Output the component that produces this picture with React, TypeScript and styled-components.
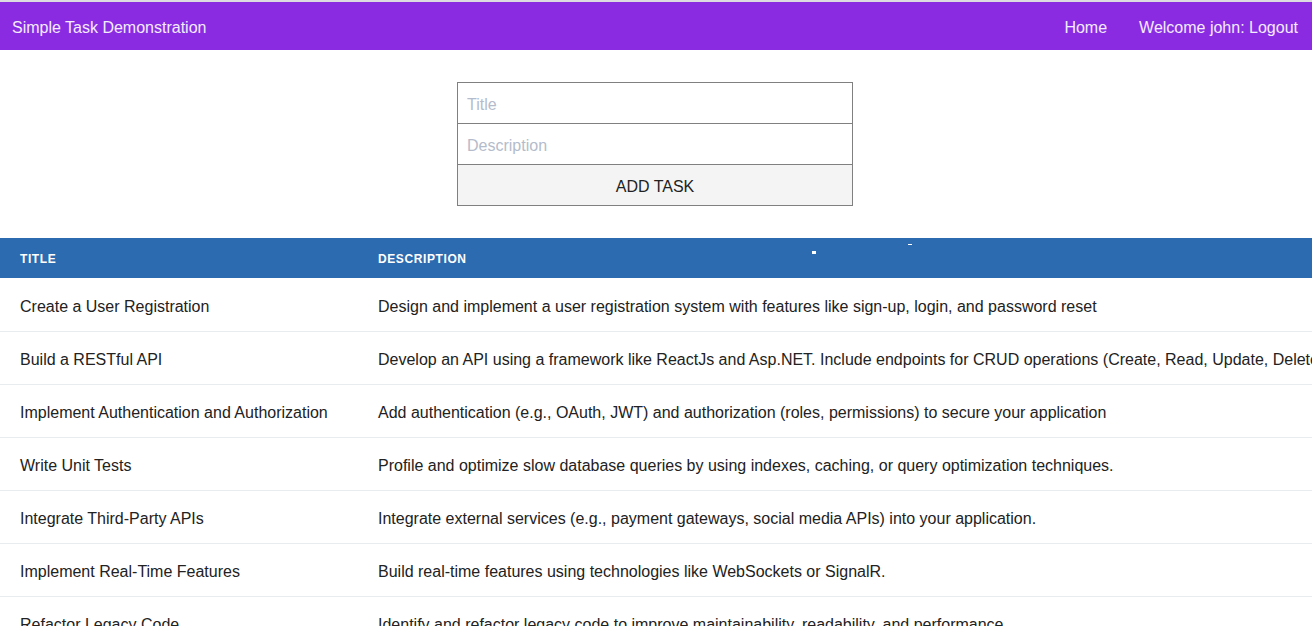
import React from "react";
import styled, { createGlobalStyle } from "styled-components";

const Global = createGlobalStyle`
  html, body { margin: 0; padding: 0; background: #fff; overflow: hidden; }
  body { font-family: "Liberation Sans", Arial, sans-serif; color: #222; }
  * { box-sizing: border-box; }
`;

const Page = styled.div`
  width: 1312px;
  overflow: hidden;
`;

const NavBar = styled.nav`
  display: flex;
  align-items: center;
  justify-content: space-between;
  height: 50px;
  border-top: 2px solid #dcdce0;
  background: #8a2be2;
  color: #f3ebff;
  font-size: 16px;
  padding: 4px 14px 0 12px;
`;

const Brand = styled.div``;

const NavLinks = styled.div`
  display: flex;
  gap: 32px;
`;

const NavLink = styled.a`
  color: inherit;
  text-decoration: none;
`;

const FormWrap = styled.div`
  display: flex;
  justify-content: center;
  padding: 32px 2px 32px 0;
`;

const Form = styled.form`
  width: 396px;
  border: 1px solid #808080;
  display: flex;
  flex-direction: column;
`;

const Input = styled.input`
  height: 41px;
  border: none;
  border-bottom: 1px solid #808080;
  padding: 4px 9px 0;
  font-family: "Liberation Sans", Arial, sans-serif;
  font-size: 16px;
  color: #222;
  outline: none;
  &::placeholder { color: #b4bccb; }
`;

const Button = styled.button`
  height: 40px;
  border: none;
  background: #f4f4f4;
  font-family: "Liberation Sans", Arial, sans-serif;
  font-size: 16px;
  color: #222;
  padding: 4px 0 0;
`;

const TableWrap = styled.div`
  position: relative;
`;

const Table = styled.table`
  border-collapse: collapse;
  white-space: nowrap;
  table-layout: fixed;
  width: 1420px;
`;

const Col = styled.col<{ $w?: number }>`
  width: ${(p) => (p.$w ? `${p.$w}px` : "auto")};
`;

const HeadCell = styled.th`
  background: #2c6bb0;
  color: #fff;
  text-align: left;
  font-size: 12px;
  font-weight: bold;
  letter-spacing: 0.6px;
  text-transform: uppercase;
  height: 40px;
  padding: 1px 20px 0;
`;

const Row = styled.tr`
  border-bottom: 1px solid #e8ecef;
`;

const Cell = styled.td`
  height: 53px;
  padding: 5px 20px 0;
  font-size: 16px;
  color: #222;
  overflow: hidden;
`;

const Speck = styled.span<{ $x: number; $y: number; $w: number; $h: number }>`
  position: absolute;
  left: ${(p) => p.$x}px;
  top: ${(p) => p.$y}px;
  width: ${(p) => p.$w}px;
  height: ${(p) => p.$h}px;
  background: #fff;
`;

const tasks = [
  ["Create a User Registration", "Design and implement a user registration system with features like sign-up, login, and password reset"],
  ["Build a RESTful API", "Develop an API using a framework like ReactJs and Asp.NET. Include endpoints for CRUD operations (Create, Read, Update, Delete)."],
  ["Implement Authentication and Authorization", "Add authentication (e.g., OAuth, JWT) and authorization (roles, permissions) to secure your application"],
  ["Write Unit Tests", "Profile and optimize slow database queries by using indexes, caching, or query optimization techniques."],
  ["Integrate Third-Party APIs", "Integrate external services (e.g., payment gateways, social media APIs) into your application."],
  ["Implement Real-Time Features", "Build real-time features using technologies like WebSockets or SignalR."],
  ["Refactor Legacy Code", "Identify and refactor legacy code to improve maintainability, readability, and performance."],
];

export default function App() {
  return (
    <Page>
      <Global />
      <NavBar>
        <Brand>Simple Task Demonstration</Brand>
        <NavLinks>
          <NavLink href="#">Home</NavLink>
          <NavLink href="#">Welcome john: Logout</NavLink>
        </NavLinks>
      </NavBar>
      <FormWrap>
        <Form onSubmit={(e) => e.preventDefault()}>
          <Input placeholder="Title" />
          <Input placeholder="Description" />
          <Button type="submit">ADD TASK</Button>
        </Form>
      </FormWrap>
      <TableWrap>
        <Table>
          <colgroup>
            <Col $w={358} />
            <Col />
          </colgroup>
          <thead>
            <tr>
              <HeadCell>Title</HeadCell>
              <HeadCell>Description</HeadCell>
            </tr>
          </thead>
          <tbody>
            {tasks.map(([t, d]) => (
              <Row key={t}>
                <Cell>{t}</Cell>
                <Cell>{d}</Cell>
              </Row>
            ))}
          </tbody>
        </Table>
        <Speck $x={812} $y={13} $w={4} $h={3} />
        <Speck $x={908} $y={6} $w={4} $h={1} />
      </TableWrap>
    </Page>
  );
}
